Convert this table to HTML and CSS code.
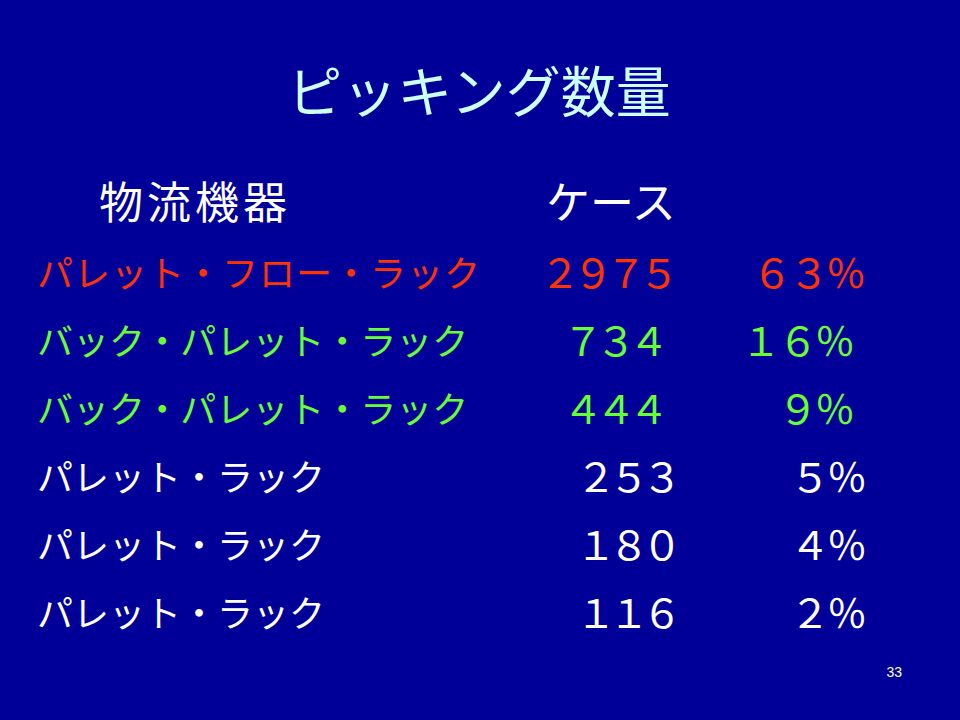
FILE: index.html
```html
<!DOCTYPE html>
<html lang="ja">
<head>
<meta charset="utf-8">
<link rel="stylesheet" href="styles.css">
</head>
<body>
<div class="slide">
  <h1 class="title">ピッキング数量</h1>
  <div class="table">
    <div class="row head">
      <span class="label">物流機器</span>
      <span class="num">ケース</span>
      <span class="pct"></span>
    </div>
    <div class="row red">
      <span class="label">パレット・フロー・ラック</span>
      <span class="num">２９７５</span>
      <span class="pct">６３％</span>
    </div>
    <div class="row green">
      <span class="label">バック・パレット・ラック</span>
      <span class="num">７３４</span>
      <span class="pct">１６％</span>
    </div>
    <div class="row green">
      <span class="label">バック・パレット・ラック</span>
      <span class="num">４４４</span>
      <span class="pct">９％</span>
    </div>
    <div class="row white">
      <span class="label">パレット・ラック</span>
      <span class="num">２５３</span>
      <span class="pct">５％</span>
    </div>
    <div class="row white">
      <span class="label">パレット・ラック</span>
      <span class="num">１８０</span>
      <span class="pct">４％</span>
    </div>
    <div class="row white">
      <span class="label">パレット・ラック</span>
      <span class="num">１１６</span>
      <span class="pct">２％</span>
    </div>
  </div>
  <div class="page">33</div>
</div>
</body>
</html>
```
FILE: styles.css
```css
html, body {
  margin: 0;
  padding: 0;
  background: #000099;
}
.slide {
  width: 960px;
  height: 720px;
  box-sizing: border-box;
  background: #000099;
  font-family: "Noto Sans CJK JP", "Liberation Sans", sans-serif;
  color: #ffffff;
  display: flex;
  flex-direction: column;
  padding-top: 54px;
}
.title {
  margin: 0;
  font-weight: normal;
  font-size: 55px;
  line-height: 68px;
  color: #ccffff;
  text-align: center;
  padding-right: 2px;
}
.table {
  margin-top: 50px;
  padding-left: 37px;
  display: flex;
  flex-direction: column;
}
.row {
  display: grid;
  grid-template-columns: 500px 142px 185px;
  font-size: 36px;
  line-height: 68px;
  height: 68px;
  white-space: nowrap;
}
.row .num {
  text-align: right;
  font-size: 40px;
  letter-spacing: -7px;
}
.row .pct {
  text-align: right;
  font-size: 40px;
  letter-spacing: -3px;
}
.head {
  height: 65px;
  line-height: 56px;
}
.head .label {
  font-size: 44px;
  letter-spacing: 4px;
  padding-left: 62px;
}
.head .num {
  font-size: 44px;
  letter-spacing: 0;
  text-align: left;
  padding-left: 9px;
}
.red { color: #ff3300; }
.green { color: #66ff33; }
.white { color: #ffffff; }
.red .label { letter-spacing: 1px; }
.red .num { padding-right: 7px; }
.red .pct { padding-right: 1px; }
.green .num { padding-right: 17px; }
.green .pct { padding-right: 12px; }
.white .num { padding-right: 4px; }
.page {
  margin-top: auto;
  align-self: flex-end;
  margin-right: 58px;
  margin-bottom: 40px;
  font-family: "Liberation Sans", sans-serif;
  font-size: 14px;
  line-height: 16px;
}
```
